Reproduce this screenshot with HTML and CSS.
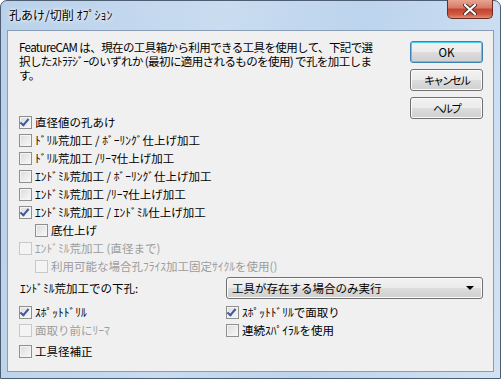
FILE: index.html
```html
<!DOCTYPE html>
<html lang="ja">
<head>
    <meta charset="UTF-8">
    <title>孔あけ/切削 ｵﾌﾟｼｮﾝ</title>
    <link rel="stylesheet" href="styles.css">
</head>
<body>
    <div class="window">
        <div class="titlebar">
            <span class="title">孔あけ/切削 ｵﾌﾟｼｮﾝ</span>
            <button class="close" type="button">
                <svg width="14" height="11" viewBox="0 0 14 11">
                    <path d="M2 1 L12 10 M12 1 L2 10" stroke="#4a2a26" stroke-width="4" stroke-linecap="round"/>
                    <path d="M2 1 L12 10 M12 1 L2 10" stroke="#ffffff" stroke-width="2.2" stroke-linecap="round"/>
                </svg>
            </button>
        </div>

        <div class="client">
            <div class="top">
                <div class="main">
                    <div class="desc">
                        <div class="line">FeatureCAM は、現在の工具箱から利用できる工具を使用して、下記で選</div>
                        <div class="line">択したｽﾄﾗﾃｼﾞｰのいずれか (最初に適用されるものを使用) で孔を加工しま</div>
                        <div class="line">す。</div>
                    </div>

                    <div class="checks">
                        <label class="check"><span class="box on"></span>直径値の孔あけ</label>
                        <label class="check"><span class="box"></span>ﾄﾞﾘﾙ荒加工 / ﾎﾞｰﾘﾝｸﾞ仕上げ加工</label>
                        <label class="check"><span class="box"></span>ﾄﾞﾘﾙ荒加工 /ﾘｰﾏ仕上げ加工</label>
                        <label class="check"><span class="box"></span>ｴﾝﾄﾞﾐﾙ荒加工 / ﾎﾞｰﾘﾝｸﾞ仕上げ加工</label>
                        <label class="check"><span class="box"></span>ｴﾝﾄﾞﾐﾙ荒加工 /ﾘｰﾏ仕上げ加工</label>
                        <label class="check"><span class="box on"></span>ｴﾝﾄﾞﾐﾙ荒加工 / ｴﾝﾄﾞﾐﾙ仕上げ加工</label>
                        <label class="check sub"><span class="box"></span>底仕上げ</label>
                        <label class="check off"><span class="box"></span>ｴﾝﾄﾞﾐﾙ荒加工 (直径まで)</label>
                        <label class="check sub off"><span class="box"></span>利用可能な場合孔ﾌﾗｲｽ加工固定ｻｲｸﾙを使用()</label>
                    </div>
                </div>

                <div class="buttons">
                    <button class="btn default" type="button">OK</button>
                    <button class="btn kana" type="button">キャンセル</button>
                    <button class="btn kana" type="button">ヘルプ</button>
                </div>
            </div>

            <div class="pilot">
                <span class="pilot-label">ｴﾝﾄﾞﾐﾙ荒加工での下孔:</span>
                <div class="select">
                    <span>工具が存在する場合のみ実行</span>
                    <svg width="8" height="4" viewBox="0 0 8 4"><path d="M0 0 H8 L4 4 Z" fill="#000"/></svg>
                </div>
            </div>

            <div class="options">
                <label class="check"><span class="box on"></span>ｽﾎﾟｯﾄﾄﾞﾘﾙ</label>
                <label class="check"><span class="box on"></span>ｽﾎﾟｯﾄﾄﾞﾘﾙで面取り</label>
                <label class="check off"><span class="box"></span>面取り前にﾘｰﾏ</label>
                <label class="check"><span class="box"></span>連続ｽﾊﾟｲﾗﾙを使用</label>
                <label class="check last"><span class="box"></span>工具径補正</label>
            </div>
        </div>
    </div>
</body>
</html>
```

FILE: styles.css
```css
body {
    margin: 0;
    font-family: "Noto Sans CJK JP", "Liberation Sans", sans-serif;
    font-size: 11.5px;
    color: #000;
    background: #fff;
}

.window {
    width: 501px;
    height: 379px;
    box-sizing: border-box;
    border: 1px solid #4d5e73;
    border-radius: 7px 7px 0 0;
    background: linear-gradient(100deg, #b9d1ea 0%, #c9dcf0 40%, #bcd4ed 65%, #d2e2f3 100%);
    padding: 0 6px 6px 6px;
    display: flex;
    flex-direction: column;
}

.titlebar {
    height: 29px;
    display: flex;
    align-items: flex-start;
    justify-content: space-between;
}

.title {
    margin: 6px 0 0 2px;
    font-size: 12px;
    line-height: 16px;
    text-shadow: 0 0 6px #fff, 0 0 3px #fff;
}

.close {
    width: 46px;
    height: 19px;
    margin: -1px 1px 0 0;
    padding: 0;
    border: 1px solid #6b2a22;
    border-top: none;
    border-radius: 0 0 5px 5px;
    background: linear-gradient(#e8a493 0%, #d47a64 45%, #c4422c 50%, #cf5a44 80%, #e08f76 100%);
    display: flex;
    align-items: center;
    justify-content: center;
}

.client {
    flex: 1;
    background: #f0f0f0;
    border: 1px solid #8a9db6;
    padding: 9px 10px 0 11px;
    display: flex;
    flex-direction: column;
}

.top {
    display: flex;
    justify-content: space-between;
}

.desc {
    letter-spacing: -0.6px;
}

.line {
    height: 14px;
    line-height: 14px;
    white-space: nowrap;
}

.checks {
    margin-top: 31px;
    display: flex;
    flex-direction: column;
}

.check {
    height: 18px;
    display: flex;
    align-items: center;
    gap: 3px;
    white-space: nowrap;
}

.check.sub {
    padding-left: 16px;
}

.check.off {
    color: #9d9d9d;
}

.box {
    width: 11px;
    height: 11px;
    border: 1px solid #8e8f8f;
    background: linear-gradient(135deg, #dcdcdc, #f8f8f8);
    box-shadow: inset 0 0 0 1px #f4f4f4;
    position: relative;
    flex: none;
}

.off .box {
    border-color: #c9c9c9;
    background: #f4f4f4;
    box-shadow: none;
}

.box.on::after {
    content: "";
    position: absolute;
    left: 2px;
    top: 0px;
    width: 3px;
    height: 7px;
    border: solid #3d58a0;
    border-width: 0 2px 2px 0;
    transform: rotate(40deg);
}

.buttons {
    padding-top: 1px;
    display: flex;
    flex-direction: column;
    gap: 6px;
}

.btn {
    width: 73px;
    height: 22px;
    font-family: inherit;
    font-size: 11.5px;
    border: 1px solid #707070;
    border-radius: 3px;
    background: linear-gradient(#f2f2f2 0%, #ebebeb 50%, #dddddd 50%, #cfcfcf 100%);
    box-shadow: inset 0 0 0 1px #fbfbfb;
    padding: 0;
    color: #000;
}

.btn.kana {
    letter-spacing: -2px;
    font-size: 11px;
}

.btn.default {
    border-color: #3c7fb1;
    box-shadow: inset 0 0 0 1px #48d0f6;
}

.pilot {
    margin-top: 2px;
    display: flex;
    align-items: center;
    justify-content: space-between;
}

.pilot-label {
    padding-left: 1px;
}

.select {
    width: 257px;
    height: 22px;
    box-sizing: border-box;
    border: 1px solid #707070;
    border-radius: 3px;
    background: linear-gradient(#f2f2f2 0%, #ebebeb 50%, #dddddd 50%, #cfcfcf 100%);
    box-shadow: inset 0 0 0 1px #fbfbfb;
    display: flex;
    align-items: center;
    justify-content: space-between;
    padding: 0 8px 0 5px;
}

.options {
    margin-top: 4px;
    display: grid;
    grid-template-columns: 207px 1fr;
}

.check.last {
    margin-top: 3px;
}
```
